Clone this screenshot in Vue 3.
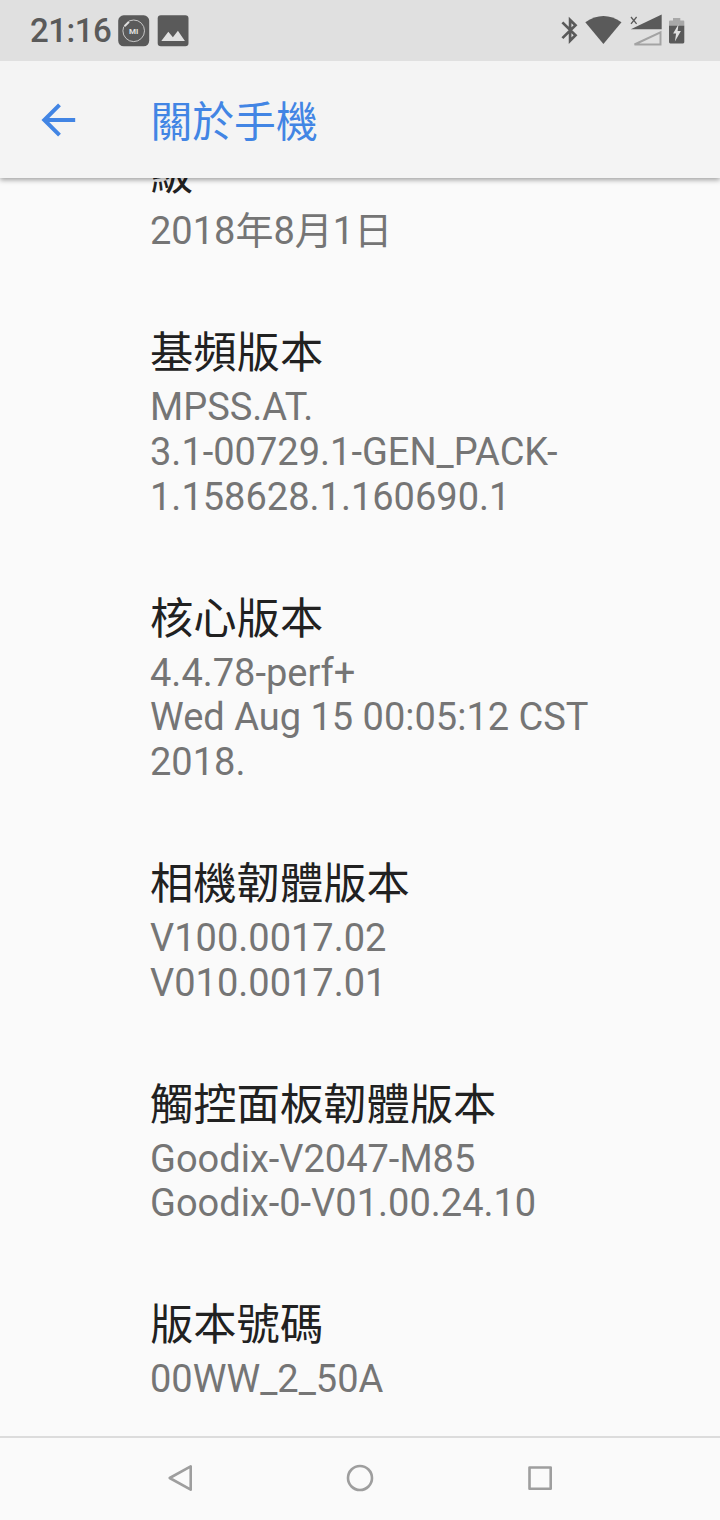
<script setup>
const items = [
  { title: '級', lines: ['2018年8月1日'] },
  { title: '基頻版本', lines: ['MPSS.AT.', '3.1-00729.1-GEN_PACK-', '1.158628.1.160690.1'] },
  { title: '核心版本', lines: ['4.4.78-perf+', 'Wed Aug 15 00:05:12 CST', '2018.'] },
  { title: '相機韌體版本', lines: ['V100.0017.02', 'V010.0017.01'] },
  { title: '觸控面板韌體版本', lines: ['Goodix-V2047-M85', 'Goodix-0-V01.00.24.10'] },
  { title: '版本號碼', lines: ['00WW_2_50A'] }
]
</script>

<template>
  <div class="phone">
    <header class="top">
      <div class="status-bar">
        <span class="clock">21:16</span>
        <svg class="notifications" width="72" height="32" viewBox="118 14.5 72 32">
          <rect x="118.2" y="14.8" width="31" height="31" rx="5.5" fill="#5a5a5a" />
          <circle cx="133.7" cy="30.3" r="10.8" fill="none" stroke="#d4d4d4" stroke-width="0.9" />
          <path d="M123.6 26.2l5.4-5.4" stroke="#5a5a5a" stroke-width="5" />
          <path d="M125 25.2l3.5-3.5" stroke="#e0e0e0" stroke-width="2" stroke-linecap="round" />
          <text x="133.7" y="33.3" class="mi">MI</text>
          <rect x="157.7" y="14.8" width="30.8" height="31" rx="3.2" fill="#5a5a5a" />
          <path d="M161.3 40.6l7-9.4 4.6 5.6 5-6.6 7 10.4z" fill="#e0e0e0" />
        </svg>
        <svg class="system-icons" width="126" height="34" viewBox="560 14 126 34">
          <path d="M562.4 22.4l13.1 12.9-5.4 5.4V20l5.4 5.2-13.1 12.9" fill="none" stroke="#5a5a5a" stroke-width="2.7" />
          <path d="M585.3 22.3Q603.5 9.5 621.5 22.3L603.4 44z" fill="#5a5a5a" />
          <path d="M631 17l5.6 6.8M636.6 17l-5.6 6.8" stroke="#5a5a5a" stroke-width="1.3" />
          <path d="M630.8 29.3L661.7 14.6V29.3z" fill="#5a5a5a" />
          <path d="M634.5 44.5L660.5 32.3V44.5z" fill="none" stroke="#a3a3a3" stroke-width="2" />
          <path d="M669 26v-4.5q0-1 1-1h3v-2.5h7.3v2.5h3q1 0 1 1V26z" fill="#a8a8a8" />
          <path d="M669 25.8h15.3v16.3q0 1.3-1.3 1.3h-12.7q-1.3 0-1.3-1.3z" fill="#5a5a5a" />
          <path d="M678.5 24.2l-5.4 9.2h3l-1.2 8 6-10.5h-3.3z" fill="#e0e0e0" />
        </svg>
      </div>
      <div class="app-bar">
        <svg class="back-btn" width="36" height="36" viewBox="0 0 36 36">
          <path d="M34.2 18H4M18.5 2.8L3.3 18l15.2 15.2" fill="none" stroke="#4285e4" stroke-width="4" />
        </svg>
        <h1>關於手機</h1>
      </div>
    </header>

    <main class="content">
      <div class="list">
        <section v-for="item in items" :key="item.title" class="item">
          <h2>{{ item.title }}</h2>
          <p v-for="line in item.lines" :key="line">{{ line }}</p>
        </section>
      </div>
    </main>

    <nav class="nav-bar">
      <svg width="28" height="28" viewBox="0 0 28 28">
        <path d="M24.7 2.3v23.4L3.7 14z" />
      </svg>
      <svg width="28" height="28" viewBox="0 0 28 28">
        <circle cx="14" cy="14" r="12" />
      </svg>
      <svg width="28" height="28" viewBox="0 0 28 28">
        <rect x="3.5" y="3.5" width="21.2" height="21.2" />
      </svg>
    </nav>
  </div>
</template>

<style>
body { margin: 0; }
</style>

<style scoped>
.phone {
  display: flex;
  flex-direction: column;
  width: 720px;
  height: 1520px;
  overflow: hidden;
  background: #fafafa;
  font-family: Roboto, "Noto Sans CJK TC", sans-serif;
}

.top {
  position: relative;
  z-index: 1;
  flex: none;
  background: #f4f4f4;
  box-shadow: 0 2px 5px rgba(0, 0, 0, 0.36);
}

.status-bar {
  display: flex;
  align-items: center;
  height: 61px;
  padding: 0 34px 0 30px;
  box-sizing: border-box;
  background: #e0e0e0;
}
.clock { width: 88px; font-size: 33px; font-weight: 500; letter-spacing: -0.5px; line-height: 38px; color: #5a5a5a; }
.mi { font-size: 8px; font-weight: 700; fill: #e0e0e0; text-anchor: middle; }
.system-icons { margin-left: auto; }

.app-bar {
  display: flex;
  align-items: center;
  height: 117px;
  padding-left: 41px;
}
.back-btn { flex: none; }
h1 { margin: 7px 0 0 73.5px; font-size: 41.8px; font-weight: 400; line-height: 56px; color: #4285e4; }

/* the list is scrolled, its first title is half under the header */
.content { flex: 1; overflow: hidden; }
.list { margin-top: -32.6px; padding-left: 150px; }
.item { padding-bottom: 69.33px; }
.item:first-child h2 { padding-bottom: 2px; margin-top: -1px; }
h2 { margin: 0; font-size: 43.3px; font-weight: 400; line-height: 62px; color: #212121; white-space: nowrap; }
p { margin: 0; font-size: 38px; line-height: 44.67px; color: #757575; white-space: nowrap; }

.nav-bar {
  display: flex;
  flex: none;
  justify-content: center;
  gap: 152px;
  align-items: center;
  height: 84px;
  padding-bottom: 2px;
  box-sizing: border-box;
  border-top: 2px solid #dcdcdc;
}
.nav-bar svg { fill: none; stroke: #9e9e9e; stroke-width: 2.6; stroke-linejoin: round; }
</style>
